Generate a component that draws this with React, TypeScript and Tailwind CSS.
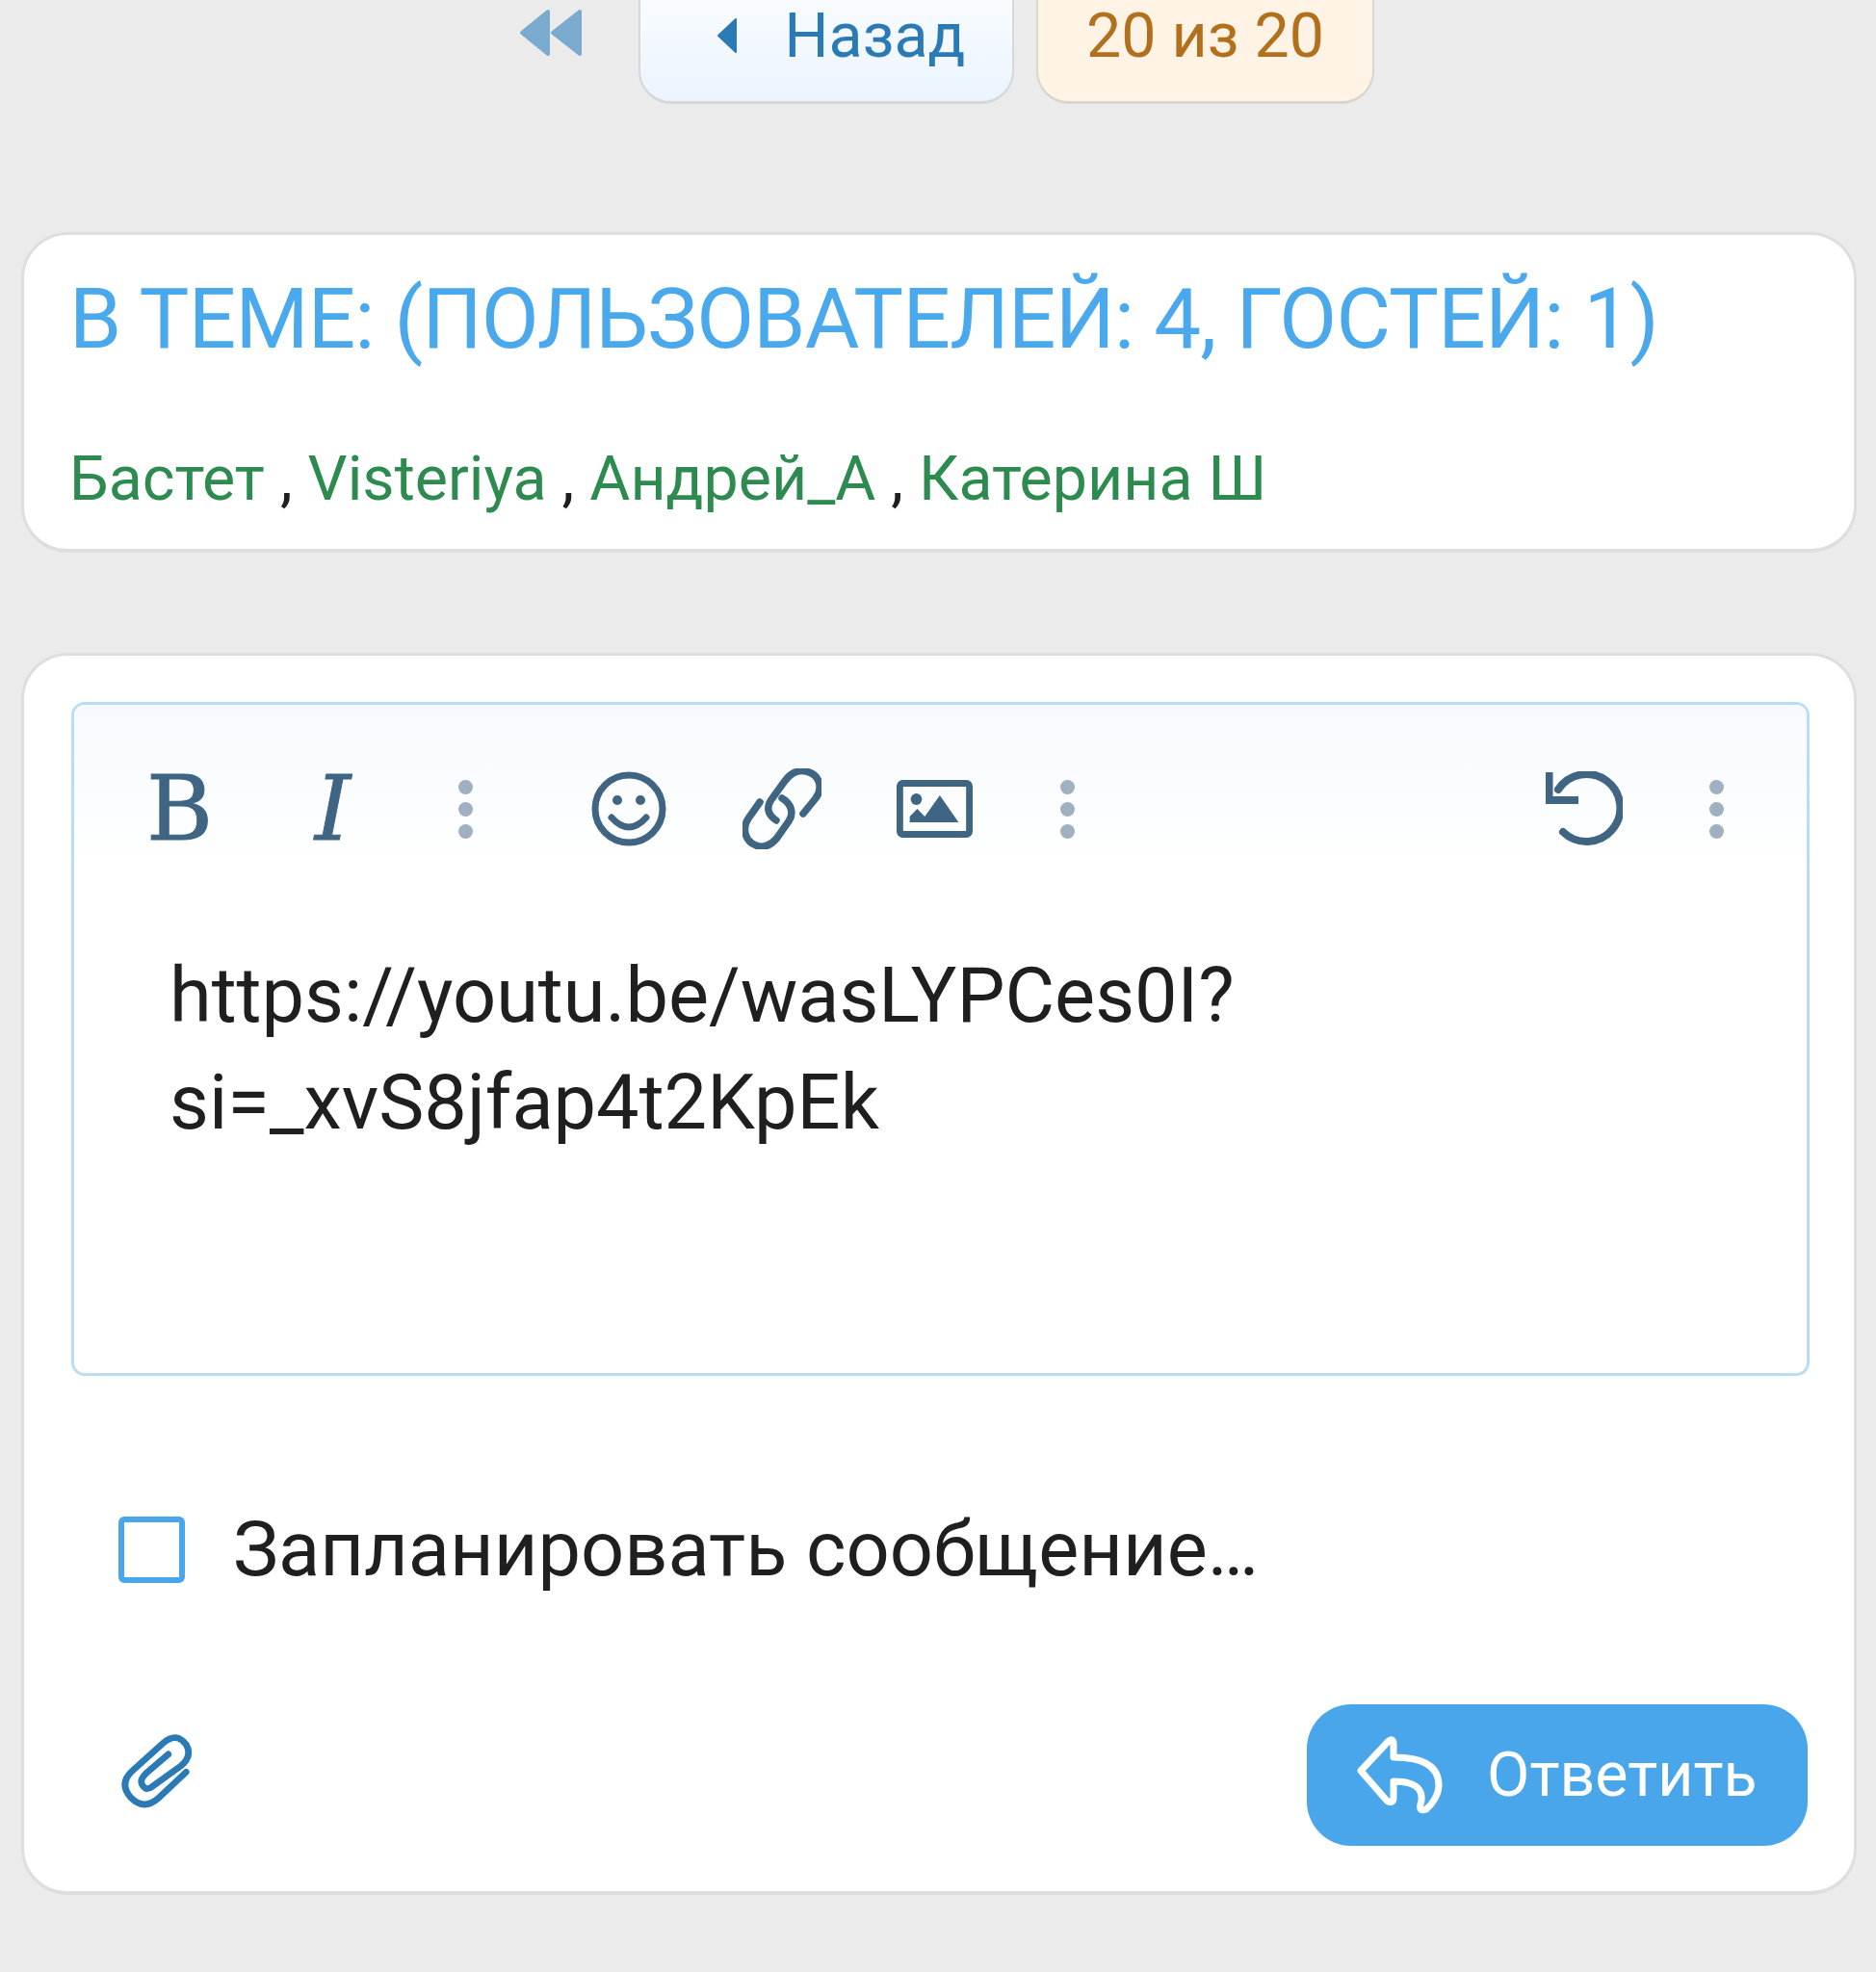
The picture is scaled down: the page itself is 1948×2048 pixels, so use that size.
const FONT = "font-['Roboto','Noto_Sans',sans-serif]";

function Dots() {
  return (
    <div className="w-[117px] flex flex-col items-center gap-[8px]">
      <span className="w-[15px] h-[15px] rounded-full bg-[#9fb0c0]" />
      <span className="w-[15px] h-[15px] rounded-full bg-[#9fb0c0]" />
      <span className="w-[15px] h-[15px] rounded-full bg-[#9fb0c0]" />
    </div>
  );
}

function ToolBtn({ children }: { children: React.ReactNode }) {
  return <div className="w-[159px] h-[84px] flex items-center justify-center text-[#3f6583]">{children}</div>;
}

export default function App() {
  return (
    <main className={`min-h-[2048px] bg-[#ebebeb] overflow-hidden ${FONT}`}>
      {/* top pager */}
      <nav className="h-[108px] pl-[539px] flex items-start">
        <svg width="66" height="50" viewBox="0 0 66 50" className="mt-[9px] mr-[58px] text-[#7aabcf]" fill="currentColor" stroke="currentColor" strokeWidth="4" strokeLinejoin="round">
          <path d="M30 3 L3 25 L30 47 Z" />
          <path d="M63 3 L35 25 L63 47 Z" />
        </svg>
        <div className="w-[390px] h-[108px] rounded-b-[34px] border-x-2 border-b-[3px] border-[#d5d8da] bg-gradient-to-b from-[#f8fcff] to-[#ebf4fd] flex items-center justify-center gap-[49px] pl-[30px] pb-[31px] mr-[23px]">
          <svg width="22" height="38" viewBox="0 0 22 38" fill="#2a7ab5" stroke="#2a7ab5" strokeWidth="2" strokeLinejoin="round">
            <path d="M20 2 L2 19 L20 36 Z" />
          </svg>
          <span className="text-[64.5px] leading-none text-[#2a7ab5]">Назад</span>
        </div>
        <div className="w-[351px] h-[108px] rounded-b-[34px] border-x-2 border-b-[3px] border-[#d9d5cf] bg-[#fff3e6] flex items-center justify-center pb-[31px]">
          <span className="text-[64.5px] leading-none text-[#b3701c]">20 из 20</span>
        </div>
      </nav>

      {/* who is in the topic */}
      <section className="mt-[133px] ml-[22px] w-[1906px] h-[333px] rounded-[48px] bg-white border-[3px] border-[#dedede] border-b-[4px] pl-[47px] pt-[37px]">
        <h2 className="text-[87px] leading-[100px] tracking-[-0.75px] font-normal text-[#4aa8ec] whitespace-nowrap">
          В ТЕМЕ: (ПОЛЬЗОВАТЕЛЕЙ: 4, ГОСТЕЙ: 1)
        </h2>
        <p className="mt-[79px] text-[64.5px] leading-[74px] text-[#1f1f1f] whitespace-nowrap">
          <span className="text-[#2e8b50]">Бастет</span> , <span className="text-[#2e8b50]">Visteriya</span> , <span className="text-[#2e8b50]">Андрей_А</span> , <span className="text-[#2e8b50]">Катерина Ш</span>
        </p>
      </section>

      {/* reply form */}
      <section className="mt-[104px] ml-[22px] w-[1906px] h-[1290px] rounded-[48px] bg-white border-[3px] border-[#dedede] border-b-[4px] pl-[49px] pr-[46px] pt-[48px]">
        <div className="w-[1805px] h-[700px] rounded-[14px] border-[3px] border-[#bcdcf3] overflow-hidden bg-white">
          <div className="h-[171px] pt-[45px] pl-[30px] pr-[35px] flex items-center justify-between bg-gradient-to-b from-[#f6fafe] to-white">
            <div className="flex items-center">
              <ToolBtn>
                <span className="font-['DejaVu_Serif',serif] text-[94px] leading-none [-webkit-text-stroke:1px_#3f6583]">B</span>
              </ToolBtn>
              <ToolBtn>
                <span className="font-['DejaVu_Serif',serif] italic text-[94px] leading-none [-webkit-text-stroke:1px_#3f6583]">I</span>
              </ToolBtn>
              <Dots />
              <div className="w-[31px]" />
              <ToolBtn>
                <svg width="78" height="78" viewBox="0 0 78 78" fill="none" stroke="currentColor" strokeWidth="7">
                  <circle cx="39" cy="39" r="35" />
                  <circle cx="27" cy="30" r="5" fill="currentColor" stroke="none" />
                  <circle cx="51" cy="30" r="5" fill="currentColor" stroke="none" />
                  <path d="M21 48 Q39 68 57 48" strokeLinecap="round" />
                </svg>
              </ToolBtn>
              <ToolBtn>
                <svg width="82" height="84" viewBox="0 0 82 84" fill="none" stroke="currentColor" strokeWidth="7.5" strokeLinecap="round">
                  <path d="M63 47 L76 31 C84 20 80 6 66 3 C58 1 50 5 44 13 L31 31 C24 40 26 48 35 54" />
                  <path d="M18 35 L6 52 C-1 63 3 76 14 80 C24 84 31 78 36 72 L48 55 C54 46 50 36 41 31" />
                </svg>
              </ToolBtn>
              <ToolBtn>
                <svg width="79" height="60" viewBox="0 0 81 60" preserveAspectRatio="none">
                  <rect x="3.5" y="3.5" width="74" height="53" rx="3" fill="none" stroke="currentColor" strokeWidth="7" />
                  <circle cx="21" cy="20" r="6" fill="currentColor" />
                  <path d="M14 44 L14 38 L22 30 L30 38 L46 16 L66 44 Z" fill="currentColor" />
                </svg>
              </ToolBtn>
              <Dots />
            </div>
            <div className="flex items-center">
              <ToolBtn>
                <svg width="80" height="78" viewBox="0 0 80 78" fill="none" stroke="currentColor" strokeWidth="8">
                  <path d="M3.5 1 V30 H34" />
                  <path d="M13 19 A35 35 0 1 1 18 63" strokeLinecap="round" />
                </svg>
              </ToolBtn>
              <Dots />
            </div>
          </div>
          <div className="pt-[75px] pl-[99px] text-[79.3px] leading-[111px] text-[#1f1f1f] whitespace-nowrap">
            <div>https://youtu.be/wasLYPCes0I?</div>
            <div>si=_xvS8jfap4t2KpEk</div>
          </div>
        </div>

        <label className="mt-[145px] ml-[49px] flex items-center gap-[50px] h-[70px]">
          <span className="w-[69px] h-[69px] rounded-[6px] border-[6px] border-[#4aa6ea] bg-white" />
          <span className="text-[79.3px] leading-none text-[#1f1f1f]">Запланировать сообщение…</span>
        </label>

        <div className="mt-[126px] flex items-center justify-between">
          <svg width="74" height="84" viewBox="372 170 220 248" className="ml-[51px] mb-[8px] text-[#2a7ab5]" fill="none" stroke="currentColor" strokeWidth="20" strokeLinecap="round">
            <path d="M575 295 L490 375 Q445 415 405 375 Q365 330 410 290 L505 205 Q545 170 575 210 Q595 245 560 275 L470 340 Q450 355 440 335 Q430 320 450 300 L520 240" />
          </svg>
          <button className="w-[520px] h-[147px] mr-[2px] rounded-[46px] bg-[#4aa6ea] flex items-center pl-[52px] gap-[45px] text-white">
            <svg width="90" height="84" viewBox="0 0 90 84" fill="none" stroke="currentColor" strokeWidth="7" strokeLinejoin="round">
              <path d="M4 37 L33 6 Q37 3 38 8 V23 C60 23 85 28 85 52 C85 62 78 72 72 77 Q64 80 66 72 C69 62 68 48 38 48 V66 Q37 72 31 68 Z" />
            </svg>
            <span className="text-[64.5px] leading-none">Ответить</span>
          </button>
        </div>
      </section>
    </main>
  );
}
